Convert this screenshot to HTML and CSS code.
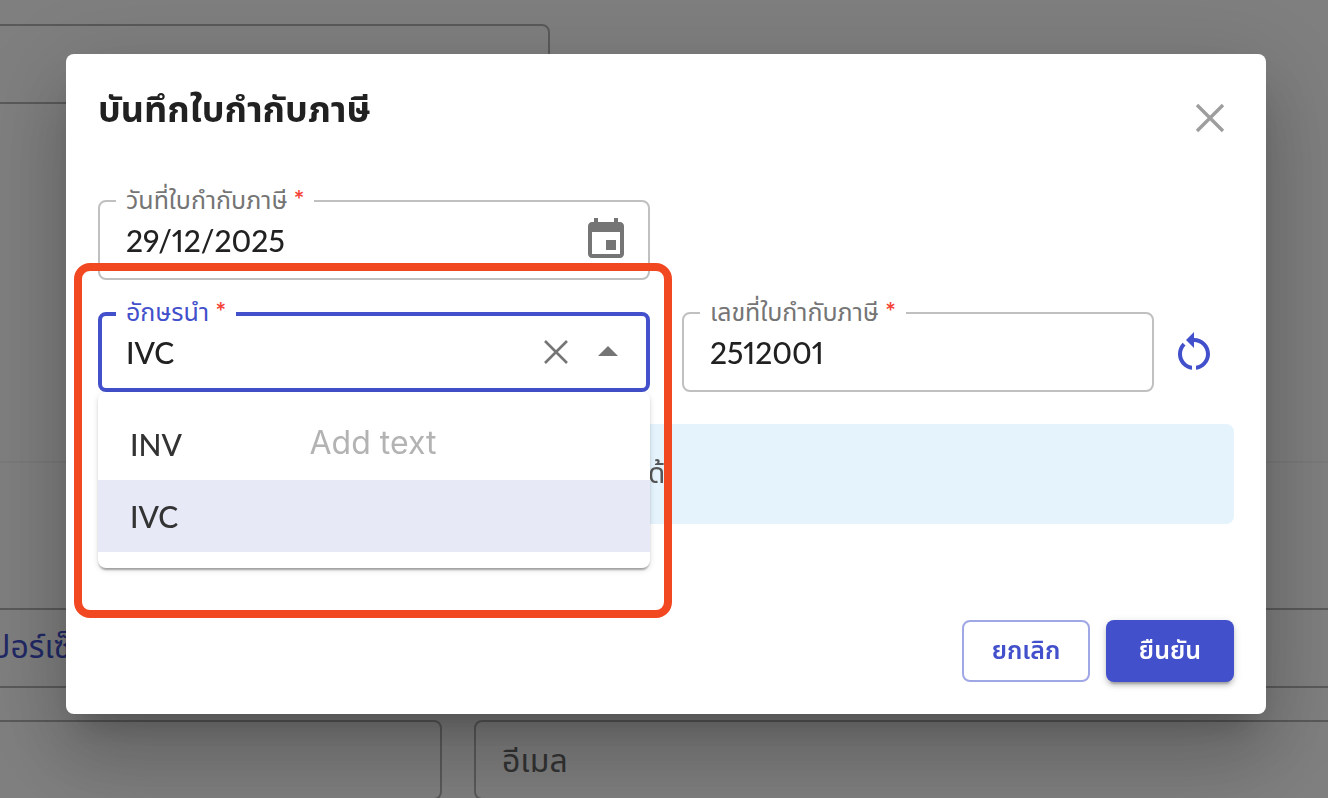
FILE: index.html
```
<!DOCTYPE html>
<html lang="th">

<head>
    <meta charset="UTF-8">
    <meta name="viewport" content="width=device-width, initial-scale=1.0">
    <title>บันทึกใบกำกับภาษี</title>
    <link rel="stylesheet" href="styles.css">
</head>

<body>
    <div class="page">
        <div class="page-top">
            <div class="box box-top"></div>
        </div>
        <div class="page-form">
            <div class="box box-percent">เปอร์เซ็นต์</div>
            <div class="page-row">
                <div class="box box-left"></div>
                <div class="box box-email">อีเมล</div>
            </div>
        </div>
    </div>

    <div class="overlay">
        <div class="dialog" role="dialog" aria-labelledby="dialog-title">
            <div class="dialog-header">
                <h2 id="dialog-title">บันทึกใบกำกับภาษี</h2>
                <button type="button" class="icon-btn close-btn" aria-label="ปิด">
                    <svg width="48" height="48" viewBox="0 0 48 48">
                        <path d="M11 11L37 37M37 11L11 37" fill="none" stroke="currentColor" stroke-width="3.4" />
                    </svg>
                </button>
            </div>

            <div class="form-grid">
                <div class="field">
                    <label for="date">วันที่ใบกำกับภาษี <span class="required">*</span></label>
                    <input type="text" id="date" value="29/12/2025">
                    <button type="button" class="icon-btn" aria-label="เลือกวันที่">
                        <svg width="48" height="48" viewBox="0 0 24 24">
                            <path fill="currentColor" d="M17 12h-5v5h5v-5zM16 1v2H8V1H6v2H5c-1.11 0-1.99.9-1.99 2L3 19c0 1.1.89 2 2 2h14c1.1 0 2-.9 2-2V5c0-1.1-.9-2-2-2h-1V1h-2zm3 18H5V8h14v11z" />
                        </svg>
                    </button>
                </div>

                <div class="field focused">
                    <label for="prefix">อักษรนำ <span class="required">*</span></label>
                    <input type="text" id="prefix" value="IVC">
                    <button type="button" class="icon-btn" aria-label="ล้าง">
                        <svg width="48" height="48" viewBox="0 0 48 48">
                            <path d="M13 13L35 35M35 13L13 35" fill="none" stroke="currentColor" stroke-width="2.6" />
                        </svg>
                    </button>
                    <button type="button" class="icon-btn" aria-label="ปิดรายการ">
                        <svg width="48" height="48" viewBox="0 0 24 24">
                            <path fill="currentColor" d="M7 14l5-5 5 5z" />
                        </svg>
                    </button>
                    <ul class="options" role="listbox">
                        <li role="option">INV</li>
                        <li role="option" class="selected" aria-selected="true">IVC</li>
                    </ul>
                    <div class="highlight">Add text</div>
                </div>

                <div class="number-group">
                    <div class="field">
                        <label for="number">เลขที่ใบกำกับภาษี <span class="required">*</span></label>
                        <input type="text" id="number" value="2512001">
                    </div>
                    <button type="button" class="icon-btn reset-btn" aria-label="รีเซ็ต">
                        <svg width="48" height="48" viewBox="0 0 24 24">
                            <path fill="currentColor" d="M12 5V2L8 6l4 4V7c3.31 0 6 2.69 6 6 0 2.97-2.17 5.43-5 5.91v2.02c3.95-.49 7-3.85 7-7.93 0-4.42-3.58-8-8-8zm-6 8c0-1.65.67-3.15 1.76-4.24L6.34 7.34C4.9 8.79 4 10.79 4 13c0 4.08 3.05 7.44 7 7.93v-2.02c-2.83-.48-5-2.94-5-5.91z" />
                        </svg>
                    </button>
                </div>
            </div>

            <div class="alert">ด้</div>

            <div class="actions">
                <button type="button" class="btn btn-outline">ยกเลิก</button>
                <button type="button" class="btn btn-primary">ยืนยัน</button>
            </div>
        </div>
    </div>
</body>

</html>
```
FILE: styles.css
```
* {
    box-sizing: border-box;
}

body {
    margin: 0;
    font-family: Lato, "Noto Sans Thai", "Noto Sans", sans-serif;
    font-size: 30px;
    color: #212121;
}

input,
button {
    font: inherit;
    color: inherit;
}

/* page behind the dialog */
.page {
    height: 100vh;
    overflow: hidden;
    background-color: #fff;
}

.page-top {
    height: 463px;
    padding-top: 24px;
    border-bottom: 2px solid #f4f4f4;
}

.box {
    height: 80px;
    padding: 0 26px;
    border: 2px solid #b4b4b4;
    border-radius: 8px;
    font-size: 32px;
    line-height: 76px;
    color: #666;
}

.box-top {
    width: 560px;
    margin-left: -10px;
}

.page-form {
    display: flex;
    flex-direction: column;
    gap: 32px;
    padding-top: 145px;
}

.box-percent {
    margin: 0 -46px;
    line-height: 72px;
    color: #4250cb;
}

.page-row {
    display: flex;
    gap: 32px;
    margin: 0 -10px;
}

.box-left {
    width: 452px;
}

.box-email {
    flex: 1;
}

.overlay {
    position: fixed;
    inset: 0;
    padding: 54px 62px 54px 66px;
    background-color: rgba(0, 0, 0, 0.5);
}

.dialog {
    padding: 32px;
    background-color: #fff;
    border-radius: 8px;
    box-shadow: 0 22px 30px -14px rgba(0, 0, 0, 0.2), 0 48px 76px 6px rgba(0, 0, 0, 0.14), 0 18px 92px 16px rgba(0, 0, 0, 0.12);
}

.dialog-header {
    display: flex;
    justify-content: space-between;
    align-items: flex-start;
    margin-bottom: 50px;
}

.dialog-header h2 {
    margin: 0;
    font-size: 36px;
    line-height: 44px;
    font-weight: 700;
}

.icon-btn {
    display: flex;
    align-items: center;
    justify-content: center;
    flex: none;
    padding: 0;
    border: none;
    background: none;
    color: #757575;
}

.close-btn {
    width: 64px;
    height: 64px;
    margin-right: -8px;
    color: #9e9e9e;
}

.form-grid {
    display: grid;
    grid-template-columns: 1fr 1fr;
    gap: 32px;
}

.form-grid > .field:first-child {
    grid-column: 1 / 2;
}

.form-grid > .focused {
    grid-row: 2;
}

.number-group {
    display: flex;
    grid-row: 2;
}

.number-group .field {
    flex: 1;
}

.reset-btn {
    width: 80px;
    color: #4250cb;
}

.field {
    position: relative;
    display: flex;
    align-items: center;
    gap: 4px;
    height: 80px;
    padding: 0 18px 0 26px;
    border: 2px solid #c0c0c0;
    border-radius: 8px;
}

.field input {
    flex: 1;
    width: 0;
    padding: 0;
    border: none;
    outline: none;
    background: none;
    font-weight: 500;
    font-variant-numeric: proportional-nums;
}

.field label {
    position: absolute;
    top: -19px;
    left: 16px;
    padding: 0 10px;
    background-color: #fff;
    font-size: 25px;
    line-height: 32px;
    color: #757575;
    white-space: nowrap;
}

.field .required {
    font-weight: 700;
    color: #f44336;
}

.focused {
    padding: 0 14px 0 24px;
    border: 4px solid #4250cb;
}

.focused label {
    top: -21px;
    left: 14px;
    color: #4250cb;
}

.options {
    position: absolute;
    top: 76px;
    left: -4px;
    right: -4px;
    z-index: 1;
    margin: 0;
    padding: 16px 0;
    list-style: none;
    background-color: #fff;
    border-radius: 8px;
    box-shadow: 0 4px 2px -2px rgba(0, 0, 0, 0.2), 0 2px 2px rgba(0, 0, 0, 0.14), 0 2px 6px rgba(0, 0, 0, 0.12);
}

.options li {
    height: 72px;
    padding: 0 32px;
    font-weight: 500;
    line-height: 72px;
    color: #333;
}

.options .selected {
    background-color: #e7e9f6;
}

/* red frame drawn over the prefix field and its list */
.highlight {
    position: absolute;
    top: -53px;
    left: -28px;
    right: -26px;
    z-index: 2;
    display: flex;
    align-items: center;
    justify-content: center;
    height: 355px;
    padding-top: 3px;
    border: 8px solid #f24822;
    border-radius: 16px;
    font-family: Inter, sans-serif;
    font-size: 32px;
    color: #b3b3b3;
    pointer-events: none;
}

.alert {
    height: 100px;
    margin-top: 32px;
    padding-left: 550px;
    background-color: #e4f3fc;
    border-radius: 8px;
    font-size: 28px;
    line-height: 96px;
    color: #555;
}

.actions {
    display: flex;
    justify-content: flex-end;
    gap: 16px;
    margin-top: 96px;
}

.btn {
    width: 128px;
    height: 62px;
    padding: 0;
    border: none;
    border-radius: 8px;
    font-size: 25px;
    font-weight: 600;
}

.btn-outline {
    border: 2px solid #a0a7e5;
    background-color: #fff;
    color: #4250cb;
}

.btn-primary {
    background-color: #4250cb;
    color: #fff;
    box-shadow: 0 6px 2px -4px rgba(0, 0, 0, 0.2), 0 4px 4px rgba(0, 0, 0, 0.14), 0 2px 10px rgba(0, 0, 0, 0.12);
}
```
